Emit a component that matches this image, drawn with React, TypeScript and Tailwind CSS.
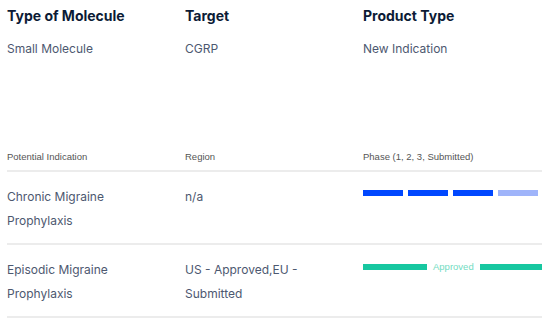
import React from "react";

type Row = {
  indication: string[];
  region: string[];
  phase: "bars" | "approved";
};

const rows: Row[] = [
  { indication: ["Chronic Migraine", "Prophylaxis"], region: ["n/a"], phase: "bars" },
  {
    indication: ["Episodic Migraine", "Prophylaxis"],
    region: ["US - Approved,EU -", "Submitted"],
    phase: "approved",
  },
];

const PhaseBars = () => (
  <div className="flex gap-[5px] pt-[18px]">
    <span className="h-[6px] w-[40px] bg-[#0047ff]" />
    <span className="h-[6px] w-[40px] bg-[#0047ff]" />
    <span className="h-[6px] w-[40px] bg-[#0047ff]" />
    <span className="h-[6px] w-[40px] bg-[#9fb4fa]" />
  </div>
);

const Approved = () => (
  <div className="flex items-center pt-[19px] w-[179px]">
    <span className="h-[6px] w-[64px] bg-[#17c7a0]" />
    <span className="px-[6px] text-[9.5px] leading-[6px] text-[#72dcc2] font-['Liberation_Sans',sans-serif]">
      Approved
    </span>
    <span className="h-[6px] flex-1 bg-[#17c7a0]" />
  </div>
);

const App = () => {
  return (
    <main className="w-[550px] h-[323px] bg-white pl-[7px] font-['Inter',sans-serif] overflow-hidden">
      <section className="grid grid-cols-[178px_178px_178px] pt-[6px]">
        {[
          ["Type of Molecule", "Small Molecule"],
          ["Target", "CGRP"],
          ["Product Type", "New Indication"],
        ].map(([label, value]) => (
          <div key={label} className="flex flex-col">
            <h2 className="text-[14px] leading-[20px] font-bold text-[#0c1b36]">{label}</h2>
            <p className="mt-[13px] text-[12px] leading-[20px] text-[#4d5870]">{value}</p>
          </div>
        ))}
      </section>

      <table className="mt-[91px] w-[535px] border-collapse text-left">
        <thead>
          <tr className="border-b-2 border-[#ececec] text-[9.5px] text-[#555] font-['Liberation_Sans',sans-serif]">
            <th className="w-[178px] font-normal pt-[1px] pb-[7px] leading-[12px]">Potential Indication</th>
            <th className="w-[178px] font-normal pt-[1px] pb-[7px] leading-[12px]">Region</th>
            <th className="font-normal pt-[1px] pb-[7px] leading-[12px]">Phase (1, 2, 3, Submitted)</th>
          </tr>
        </thead>
        <tbody>
          {rows.map((r, i) => (
            <tr key={i} className="border-b-2 border-[#ececec] align-top text-[12px] leading-[24px] text-[#4d5870]">
              <td className="pt-[13px] pb-[10px]">
                {r.indication.map((t) => (
                  <div key={t}>{t}</div>
                ))}
              </td>
              <td className="pt-[13px] pb-[10px]">
                {r.region.map((t) => (
                  <div key={t}>{t}</div>
                ))}
              </td>
              <td className="py-0">{r.phase === "bars" ? <PhaseBars /> : <Approved />}</td>
            </tr>
          ))}
        </tbody>
      </table>
    </main>
  );
};

export default App;
